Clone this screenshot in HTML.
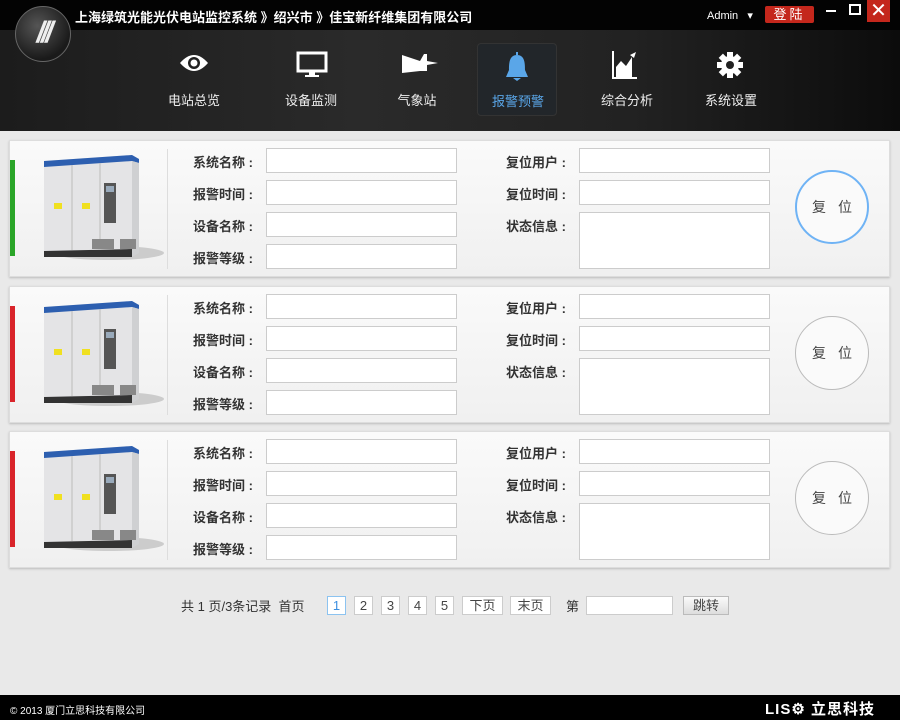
<!DOCTYPE html>
<html><head><meta charset="utf-8"><style>
*{margin:0;padding:0;box-sizing:border-box}
body{width:900px;height:720px;overflow:hidden;background:#e9e9e9;font-family:"Liberation Sans","Noto Sans CJK SC",sans-serif;position:relative}
.top{position:absolute;left:0;top:0;width:900px;height:30px;background:#030303}
.nav{position:absolute;left:0;top:30px;width:900px;height:101px;background:linear-gradient(90deg,#1c1c1c,#2a2a2a 40%,#222 70%,#0c0c0c)}
.title{position:absolute;left:75px;top:7px;color:#fff;font-size:13px;font-weight:bold}
.logo{position:absolute;left:15px;top:6px;width:56px;height:56px;border-radius:50%;background:radial-gradient(circle at 40% 35%,#555,#1a1a1a 70%);border:1px solid #666;color:#eee;font-size:30px;font-weight:bold;font-style:italic;text-align:center;line-height:52px;letter-spacing:-4px}
.item{position:absolute;top:43px;width:80px;height:73px;text-align:center;color:#eee;font-size:13px}
.item .lb{position:absolute;top:47px;left:0;width:80px}
.item svg{position:absolute;left:25px;top:8px}
.act{background:#22262a;border:1px solid #333;border-radius:4px}
.act .lb{color:#5aa6e8}
.panel{position:absolute;left:9px;width:881px;height:137px;background:linear-gradient(#fafafa,#f0f0f0);border:1px solid #ddd;box-shadow:0 1px 2px #bbb}
.bar{position:absolute;left:0;top:19px;width:5px;height:96px}
.div{position:absolute;left:157px;top:8px;width:1px;height:120px;background:#ddd}
.lab{position:absolute;font-size:13px;font-weight:bold;color:#333;width:90px;text-align:right;white-space:nowrap}
.inp{position:absolute;background:#fff;border:1px solid #ccc;width:191px;height:25px}
.btn{position:absolute;left:785px;top:29px;width:74px;height:74px;border-radius:50%;background:#fafafa;border:1px solid #bbb;text-align:center;line-height:72px;font-size:14px;color:#444;letter-spacing:12px;text-indent:12px}
.pg{position:absolute;top:596px;font-size:13px;color:#333}
.pb{position:absolute;top:596px;height:19px;background:#fff;border:1px solid #ccc;font-size:13px;text-align:center;line-height:17px;color:#444}
.foot{position:absolute;left:0;top:695px;width:900px;height:25px;background:#000;color:#fff;font-size:10px}
</style></head><body>
<div class="top"></div>
<div class="nav"></div>
<div class="logo">///</div>
<div class="title">上海绿筑光能光伏电站监控系统 》绍兴市 》佳宝新纤维集团有限公司</div>
<div style="position:absolute;left:707px;top:9px;color:#fff;font-size:11px">Admin &nbsp;&nbsp;▾</div>
<div style="position:absolute;left:765px;top:6px;width:49px;height:17px;background:#c4271c;color:#fff;font-size:13px;text-align:center;line-height:17px;border-radius:2px;letter-spacing:3px">登陆</div>
<div style="position:absolute;left:826px;top:10px;width:10px;height:2px;background:#fff"></div>
<div style="position:absolute;left:849px;top:4px;width:12px;height:11px;border:2px solid #fff"></div>
<div style="position:absolute;left:867px;top:0;width:23px;height:22px;background:#c4271c;color:#fff;font-size:20px;text-align:center;line-height:22px">✕</div>

<div class="item" style="left:154px"><svg width="30" height="24" viewBox="0 0 30 24"><path d="M1 12Q15-4 29 12Q15 28 1 12Z" fill="#fff"/><circle cx="15" cy="12" r="6" fill="#222"/><circle cx="15" cy="12" r="3.5" fill="#fff"/></svg><div class="lb">电站总览</div></div>
<div class="item" style="left:271px"><svg width="32" height="28" viewBox="0 0 32 28"><rect x="2" y="2" width="28" height="18" fill="none" stroke="#fff" stroke-width="3"/><rect x="13" y="20" width="6" height="4" fill="#fff"/><rect x="9" y="24" width="14" height="2" fill="#fff"/></svg><div class="lb">设备监测</div></div>
<div class="item" style="left:377px"><svg width="36" height="28" viewBox="0 0 36 28"><path d="M0 4L18 10L22 3L25 3L25 10L36 12L25 14L25 20L18 20L0 22Z" fill="#fff"/></svg><div class="lb">气象站</div></div>
<div class="item act" style="left:477px"><svg width="28" height="32" viewBox="0 0 28 32"><path d="M13 0h2v3h-2zM14 3C6 3 6 12 6 18L3 25H25L22 18C22 12 22 3 14 3ZM10 26h8l-4 3z" fill="#5aa6e8"/></svg><div class="lb">报警预警</div></div>
<div class="item" style="left:587px"><svg width="26" height="28" viewBox="0 0 26 28"><path d="M1 0V27H25" fill="none" stroke="#fff" stroke-width="2"/><path d="M4 26V16L9 10L14 15L20 6V26Z" fill="#fff"/><path d="M18 4L24 1L22 7Z" fill="#fff"/></svg><div class="lb">综合分析</div></div>
<div class="item" style="left:691px"><svg width="28" height="28" viewBox="0 0 28 28"><g fill="#fff"><circle cx="14" cy="14" r="9"/><rect x="11" y="1" width="6" height="26"/><rect x="1" y="11" width="26" height="6"/><rect x="11" y="1" width="6" height="26" transform="rotate(45 14 14)"/><rect x="11" y="1" width="6" height="26" transform="rotate(-45 14 14)"/></g><circle cx="14" cy="14" r="4" fill="#222"/></svg><div class="lb">系统设置</div></div>

<div id="p"></div>
<script>
var tops=[140,286,431],cols=['#2aa528','#d9242a','#d9242a'],h='';
for(var i=0;i<3;i++){
h+='<div class="panel" style="top:'+tops[i]+'px"><div class="bar" style="background:'+cols[i]+'"></div>'+
'<svg style="position:absolute;left:24px;top:12px" width="130" height="115" viewBox="0 0 130 115"><ellipse cx="75" cy="100" rx="55" ry="7" fill="#ccc"/><path d="M10 8L98 2L105 6L105 100L10 104Z" fill="#e4e4e6"/><path d="M10 8L98 2L98 8L10 14Z" fill="#2d5fb0"/><path d="M98 2L105 6L105 10L98 8Z" fill="#2d5fb0"/><path d="M98 8L105 10L105 100L98 104Z" fill="#cfd0d2"/><path d="M10 98L98 96L98 104L10 104Z" fill="#333"/><line x1="38" y1="12" x2="38" y2="97" stroke="#bbb"/><line x1="66" y1="10" x2="66" y2="97" stroke="#bbb"/><rect x="70" y="30" width="12" height="40" fill="#555"/><rect x="72" y="33" width="8" height="6" fill="#9ab"/><rect x="20" y="50" width="8" height="6" fill="#f0e020"/><rect x="48" y="50" width="8" height="6" fill="#f0e020"/><rect x="58" y="86" width="22" height="10" fill="#888"/><rect x="86" y="86" width="16" height="10" fill="#888"/></svg>'+
'<div class="div"></div>'+
'<div class="lab" style="left:153px;top:11px">系统名称 :</div><div class="inp" style="left:256px;top:7px"></div>'+
'<div class="lab" style="left:153px;top:43px">报警时间 :</div><div class="inp" style="left:256px;top:39px"></div>'+
'<div class="lab" style="left:153px;top:75px">设备名称 :</div><div class="inp" style="left:256px;top:71px"></div>'+
'<div class="lab" style="left:153px;top:107px">报警等级 :</div><div class="inp" style="left:256px;top:103px"></div>'+
'<div class="lab" style="left:466px;top:11px">复位用户 :</div><div class="inp" style="left:569px;top:7px"></div>'+
'<div class="lab" style="left:466px;top:43px">复位时间 :</div><div class="inp" style="left:569px;top:39px"></div>'+
'<div class="lab" style="left:466px;top:75px">状态信息 :</div><div class="inp" style="left:569px;top:71px;height:57px"></div>'+
'<div class="btn"'+(i==0?' style="border:2px solid #6fb3f5;line-height:70px"':'')+'>复位</div></div>';}
document.getElementById('p').innerHTML=h;
</script>

<div class="pg" style="left:181px">共 1 页/3条记录 &nbsp;首页</div>
<div class="pb" style="left:327px;width:19px;border-color:#8cc3f0;color:#3a8ee0">1</div>
<div class="pb" style="left:354px;width:19px">2</div>
<div class="pb" style="left:381px;width:19px">3</div>
<div class="pb" style="left:408px;width:19px">4</div>
<div class="pb" style="left:435px;width:19px">5</div>
<div class="pb" style="left:462px;width:41px">下页</div>
<div class="pb" style="left:510px;width:41px">末页</div>
<div class="pg" style="left:566px">第</div>
<div class="pb" style="left:586px;width:87px"></div>
<div class="pb" style="left:683px;width:46px;background:linear-gradient(#fafafa,#ddd);border-color:#bbb">跳转</div>

<div class="foot"><span style="position:absolute;left:10px;top:7px">© 2013 厦门立思科技有限公司</span>
<span style="position:absolute;left:765px;top:3px;font-size:15px;font-weight:bold;letter-spacing:1px">LIS⚙ 立思科技</span></div>
</body></html>
